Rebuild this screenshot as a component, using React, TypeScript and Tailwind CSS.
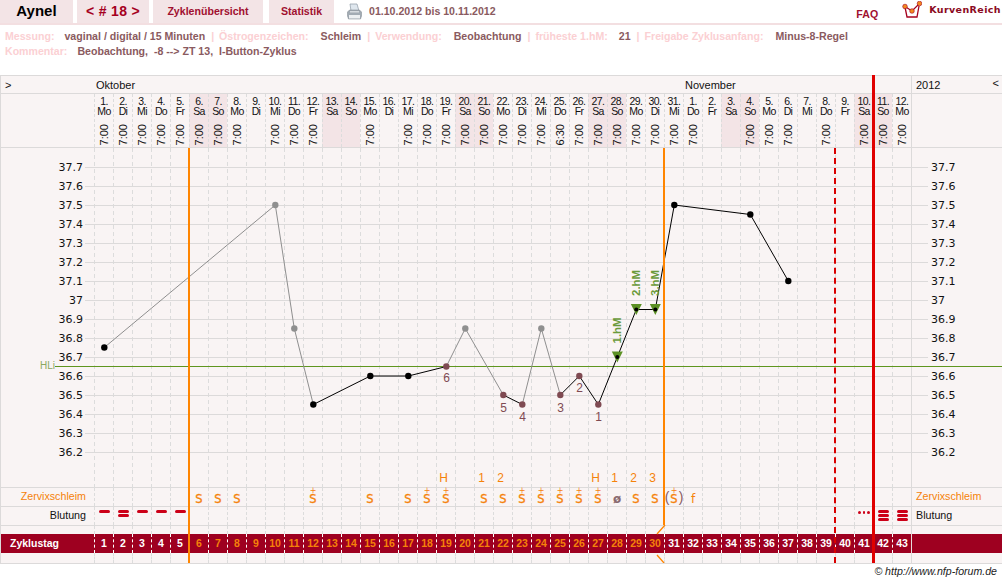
import React from "react";

const sans = "font-['Liberation_Sans',Arial,sans-serif]";
const wd = ["Mo","Di","Mi","Do","Fr","Sa","So"];
type Day = { d: number; w: string; t: string };
const days: Day[] = [];
const times: Record<number, string> = { 25: "6:30" };
const noTime = new Set([9, 13, 14, 16, 33, 34, 38, 40]);
for (let i = 0; i < 43; i++) {
  const d = i < 31 ? i + 1 : i - 30;
  const w = wd[i % 7];
  days.push({ d, w, t: noTime.has(i + 1) ? "" : (times[i + 1] ?? "7:00") });
}
const weekend = (i: number) => i % 7 === 5 || i % 7 === 6;

const X = (n: number) => 104.3 + 19 * (n - 1);
const Y = (t: number) => Math.round((37.7 - t) * 190 * 2) / 2 + 19;
const temps = [37.7,37.6,37.5,37.4,37.3,37.2,37.1,37,36.9,36.8,36.7,36.6,36.5,36.4,36.3,36.2];
const pts: Record<number, number> = {1:36.75,10:37.5,11:36.85,12:36.45,15:36.6,17:36.6,19:36.65,20:36.85,22:36.5,23:36.45,24:36.85,25:36.5,26:36.6,27:36.45,28:36.7,29:36.95,30:36.95,31:37.5,35:37.45,37:37.1};
const grey = [[1,10],[10,11],[11,12],[19,20],[20,22],[23,24],[24,25]];
const black = [[12,15],[15,17],[17,19],[22,23],[25,26],[26,27],[27,28],[28,29],[29,30],[30,31],[31,35],[35,37]];
const dotColor = (n: number) => [10,11,20,24].includes(n) ? "#8f8f8f" : [19,22,23,25,26,27].includes(n) ? "#7f4a52" : "#000";
const ranks: [number, string, number][] = [[19,"6",382],[22,"5",412],[23,"4",421],[25,"3",412],[26,"2",392],[27,"1",421]];
const hm: [number, number, string][] = [[28,36.7,"1.hM"],[29,36.95,"2.hM"],[30,36.95,"3.hM"]];

const topMarks: Record<number, string> = {19:"H",21:"1",22:"2",27:"H",28:"1",29:"2",30:"3"};
const plainS = [6,7,8,15,17,21,22,29,30];
const plusS = [12,18,19,23,24,25,26,27];

function Grid({ children }: { children?: (i: number) => React.ReactNode }) {
  return (
    <div className="grid grid-cols-[repeat(43,19px)] w-[817px] shrink-0">
      {days.map((_, i) => (
        <div key={i} className="border-l border-dashed border-[#dcdcdc] relative">
          {children ? children(i + 1) : null}
        </div>
      ))}
    </div>
  );
}

function Row({ left, right, className = "", children }: { left?: React.ReactNode; right?: React.ReactNode; className?: string; children: React.ReactNode }) {
  return (
    <div className={`flex border-b border-[#dcdada] ${className}`}>
      <div className="w-[93px] shrink-0 text-right pr-[8px]">{left}</div>
      {children}
      <div className="flex-1 border-l border-[#dcdada] pl-[4px]">{right}</div>
    </div>
  );
}

function Bleed({ n }: { n: number }) {
  return (
    <div className="flex flex-col gap-[1px] items-center">
      {Array.from({ length: n }).map((_, k) => (
        <div key={k} className="w-[11px] h-[3px] rounded-full bg-[#cc0018]" />
      ))}
    </div>
  );
}

const L = ({ children, m = 0 }: { children: React.ReactNode; m?: number }) => (
  <span className="text-[#fbd0d3]" style={{ marginLeft: m }}>{children}</span>
);
const V = ({ children, m = 0 }: { children: React.ReactNode; m?: number }) => (
  <span style={{ marginLeft: m }}>{children}</span>
);

export default function App() {
  return (
    <div className={`${sans} w-[1002px] h-[583px] bg-white relative overflow-hidden text-[12px] text-black`}>
      {/* top bar */}
      <div className="flex h-[25px] border-b-2 border-[#f3dfe1] items-stretch">
        <div className="w-[73px] bg-[#f3e4e6] text-[15px] font-bold flex items-center justify-center">Aynel</div>
        <div className="w-[72px] ml-[4px] bg-[#f3e4e6] text-[#a5001e] text-[14px] font-bold flex items-center justify-center tracking-[0.3px]">&lt; # 18 &gt;</div>
        <div className="w-[110px] ml-[4px] bg-[#f3e4e6] text-[#a01030] text-[10.6px] font-bold flex items-center justify-center">Zyklenübersicht</div>
        <div className="w-[65px] ml-[6px] bg-[#f3e4e6] text-[#a01030] text-[10.6px] font-bold flex items-center justify-center">Statistik</div>
        <div className="ml-[13px] w-[15px] flex items-center">
          <svg width="15" height="17" viewBox="0 0 15 17">
            <path d="M3 1h7l2 7H4z" fill="#dfe7ee" stroke="#8e9aa5" strokeWidth=".7" />
            <path d="M0.5 9l2-2h10l2 2v4l-1 3H1.500l-1-3z" fill="#a2abb3" stroke="#7a838a" strokeWidth=".5" />
            <rect x="2" y="12" width="11" height="3.500" fill="#eceff1" />
            <rect x="3" y="8" width="9" height="1.500" fill="#d5dade" />
          </svg>
        </div>
        <div className="ml-[7px] text-[10.6px] font-bold text-[#8a5a60] flex items-center">01.10.2012 bis 10.11.2012</div>
        <div className="ml-auto mr-[24px] text-[#a01030] text-[10.6px] font-bold flex items-end">FAQ</div>
        <div className="flex items-start pr-[1px] pt-[1px]">
          <svg width="20" height="18" viewBox="0 0 20 18" className="mr-[7px]">
            <path d="M3 6l2 10h10l2-11" fill="none" stroke="#a5001e" strokeWidth="1.3" />
            <path d="M3 5.500l7 4.500 7.500-7.500" fill="none" stroke="#a5001e" strokeWidth="1.2" />
            <circle cx="3" cy="5.500" r="2.300" fill="#f28a1e" stroke="#a5001e" strokeWidth=".6" />
            <circle cx="10" cy="10" r="2.300" fill="#f28a1e" stroke="#a5001e" strokeWidth=".6" />
            <circle cx="17.500" cy="2.500" r="2.300" fill="#f28a1e" stroke="#a5001e" strokeWidth=".6" />
          </svg>
          <span className="font-['DejaVu_Sans',sans-serif] font-bold text-[9.5px] leading-[18px] text-[#8b0a22] tracking-[0.4px]">KurvenReich</span>
        </div>
      </div>

      {/* info */}
      <div className="h-[50px] pl-[5px] pt-[4px] text-[10.6px] font-bold text-[#8a5a60] leading-[15px]">
        <div className="whitespace-nowrap">
          <L>Messung:</L><V m={10}>vaginal / digital / 15 Minuten</V><L m={6}>|</L><L m={5}>Östrogenzeichen:</L><V m={12}>Schleim</V><L m={6}>|</L><L m={5}>Verwendung:</L><V m={12}>Beobachtung</V><L m={6}>|</L><L m={5}>früheste 1.hM:</L><V m={11}>21</V><L m={6}>|</L><L m={5}>Freigabe Zyklusanfang:</L><V m={12}>Minus-8-Regel</V>
        </div>
        <div className="whitespace-pre">
          <L>Kommentar:</L><V m={10}>Beobachtung,  -8 --&gt; ZT 13,  I-Button-Zyklus</V>
        </div>
      </div>

      {/* table */}
      <div className="relative h-[489px] border-t border-l border-b border-[#dcdada] bg-[#f9f4f4] text-[#111]">
        <div className="flex h-[18px] border-b border-[#dcdada] leading-[18px] text-[11px]">
          <div className="w-[95px] pl-[4px]">&gt;</div>
          <div className="w-[589px]">Oktober</div>
          <div className="w-[226px]">November</div>
          <div className="flex-1 border-l border-[#dcdada] pl-[4px] relative">2012<span className="absolute right-[3px] top-[-2px]">&lt;</span></div>
        </div>
        <div className="flex h-[54px] border-b border-[#dcdada]">
          <div className="w-[93px] shrink-0" />
          <div className="grid grid-cols-[repeat(43,19px)] w-[817px] shrink-0">
            {days.map((x, i) => (
              <div key={i} className={`border-l border-dashed border-[#dcdcdc] flex flex-col items-center text-[10.5px] leading-[10px] tracking-[-0.6px] pt-[2px] ${weekend(i) ? "bg-[#f3e4e6]" : ""}`}>
                <span>{x.d}.</span>
                <span>{x.w}</span>
                {x.t && <span className="[writing-mode:vertical-rl] rotate-180 mt-[8px] text-[11px] leading-[12px] tracking-normal">{x.t}</span>}
              </div>
            ))}
          </div>
          <div className="flex-1 border-l border-[#dcdada]" />
        </div>

        {/* chart */}
        <div className="relative h-[340px] border-b border-[#dcdada]">
          <svg width="1002" height="340" className="absolute left-[-1px] top-0 block">
            {days.map((_, i) => (
              <line key={i} x1={94.5 + 19 * i} x2={94.5 + 19 * i} y1="0" y2="340" stroke="#dcdcdc" strokeDasharray="4 3" />
            ))}
            <line x1="911.5" x2="911.5" y1="0" y2="340" stroke="#dcdada" />
            {temps.map((t) => (
              <g key={t}>
                <line x1="85" x2="928" y1={Math.round(Y(t)) + 0.5} y2={Math.round(Y(t)) + 0.5} stroke="#dcdada" />
                <text x="83" y={Y(t) + 4} textAnchor="end" fontSize="11" fontFamily="DejaVu Sans" fill="#111">{String(t)}</text>
                <text x="931" y={Y(t) + 4} fontSize="11" fontFamily="DejaVu Sans" fill="#111">{String(t)}</text>
              </g>
            ))}
            <line x1="55" x2="1002" y1="218.5" y2="218.5" stroke="#5f961f" />
            <text x="40" y="221" fontSize="10" fontFamily="Liberation Sans" fill="#8aa860">HLi</text>
            {grey.map(([a, b]) => (
              <line key={`g${a}`} x1={X(a)} y1={Y(pts[a])} x2={X(b)} y2={Y(pts[b])} stroke="#8f8f8f" />
            ))}
            {black.map(([a, b]) => (
              <line key={`b${a}`} x1={X(a)} y1={Y(pts[a])} x2={X(b)} y2={Y(pts[b])} stroke="#000" />
            ))}
            {hm.map(([n, t, l]) => (
              <g key={n}>
                <path d={`M${X(n) - 5.5} ${Y(t) - 5.5}h11l-5.5 11z`} fill="#5c9124" />
                <text transform={`translate(${X(n) + 3.7} ${Y(t) - 13.5}) rotate(-90)`} fontSize="11.5" fontWeight="bold" fontFamily="Liberation Sans" fill="#6a9a3a">{l}</text>
              </g>
            ))}
            {Object.keys(pts).map(Number).map((n) => (
              <circle key={n} cx={X(n)} cy={Y(pts[n])} r={[28,29,30].includes(n) ? 2 : 3.2} fill={dotColor(n)} />
            ))}
            {ranks.map(([n, l, y]) => (
              <text key={n} x={X(n) + 0.2} y={y - 148} textAnchor="middle" fontSize="12" fontFamily="Liberation Sans" fill="#7f4a52">{l}</text>
            ))}
            {Object.entries(topMarks).map(([n, l]) => (
              <text key={n} x={X(Number(n)) - 2.8} y="334" textAnchor="middle" fontSize="12" fontFamily="Liberation Sans" fill="#f5820a">{l}</text>
            ))}
          </svg>
        </div>

        <Row className="h-[19px] text-[10.7px] leading-[16px]" left={<span className="text-[#f5820a]">Zervixschleim</span>} right={<span className="text-[#f5820a]">Zervixschleim</span>}>
          <Grid>
            {(n) => (
              <div className="absolute inset-x-0 top-0 h-[18px] flex flex-col items-center justify-end pb-[2px] text-[#f5820a] font-['DejaVu_Sans',sans-serif] text-[11.5px] leading-[10px]">
                {plusS.includes(n) && <span className="text-[8px] leading-[6px]">+</span>}
                {(plusS.includes(n) || plainS.includes(n)) && <span className="[-webkit-text-stroke:0.3px]">S</span>}
                {n === 28 && <span className="text-[#8a6a70] text-[12px] font-bold">ø</span>}
                {n === 31 && (
                  <span className="flex items-end whitespace-nowrap">
                    <span className="text-[#8a5a60] text-[14px] leading-[14px] font-['Liberation_Sans',sans-serif]">(</span>
                    <span className="flex flex-col items-center mx-[1px]">
                      <span className="text-[8px] leading-[6px]">+</span>
                      <span className="[-webkit-text-stroke:0.3px]">S</span>
                    </span>
                    <span className="text-[#8a5a60] text-[14px] leading-[14px] font-['Liberation_Sans',sans-serif]">)</span>
                  </span>
                )}
                {n === 32 && <span className="text-[12px]">f</span>}
              </div>
            )}
          </Grid>
        </Row>
        <Row className="h-[19px] text-[10.7px] leading-[16px]" left={<span>Blutung</span>} right={<span>Blutung</span>}>
          <Grid>
            {(n) => (
              <div className="absolute inset-0 flex justify-center items-start pt-[3px]">
                {n >= 1 && n <= 5 && <Bleed n={n === 2 ? 2 : 1} />}
                {n === 41 && (
                  <div className="flex gap-[2px] mt-[1px]">
                    <div className="w-[2.5px] h-[2.5px] rounded-full bg-[#cc0018]" />
                    <div className="w-[2.5px] h-[2.5px] rounded-full bg-[#cc0018]" />
                    <div className="w-[2.5px] h-[2.5px] rounded-full bg-[#cc0018]" />
                  </div>
                )}
                {(n === 42 || n === 43) && <Bleed n={3} />}
              </div>
            )}
          </Grid>
        </Row>
        <div className="h-[8px] flex">
          <div className="w-[93px] shrink-0" />
          <Grid />
          <div className="flex-1 border-l border-[#dcdada]" />
        </div>
        <div className="flex h-[19px] bg-[#9e0020] text-white font-bold text-[10.5px] leading-[19px]">
          <div className="w-[93px] shrink-0 pl-[9px]">Zyklustag</div>
          <div className="grid grid-cols-[repeat(43,19px)] w-[817px] shrink-0">
            {days.map((_, i) => (
              <div key={i} className={`border-l border-dashed border-white text-center ${i >= 5 && i < 30 ? "text-[#f5820a]" : ""}`}>{i + 1}</div>
            ))}
          </div>
          <div className="flex-1 border-l border-[#e8dcdc]" />
        </div>
        <div className="h-[10px] flex">
          <div className="w-[93px] shrink-0" />
          <Grid />
          <div className="flex-1 border-l border-[#dcdada]" />
        </div>

        {/* overlays */}
        <div className="absolute left-[187px] top-[72px] w-[2px] h-[415px] bg-[#ff8500]" />
        <div className="absolute left-[662px] top-[72px] w-[2px] h-[377px] bg-[#ff8500]" />
        <svg className="absolute left-[654px] top-[449px]" width="12" height="38" viewBox="0 0 12 38">
          <path d="M10 0L2 9M2 30l7 8" stroke="#ff8500" strokeWidth="1.3" fill="none" />
        </svg>
        <div className="absolute left-[833px] top-[72px] h-[415px] border-l-[2px] border-dashed border-[#d90000]" />
        <div className="absolute left-[871px] top-[-1px] w-[3px] h-[488px] bg-[#e00000]" />
      </div>
      <div className="absolute right-[5px] top-[564px] italic text-[10.6px] leading-[14px] text-[#222]">© http://www.nfp-forum.de</div>
    </div>
  );
}
